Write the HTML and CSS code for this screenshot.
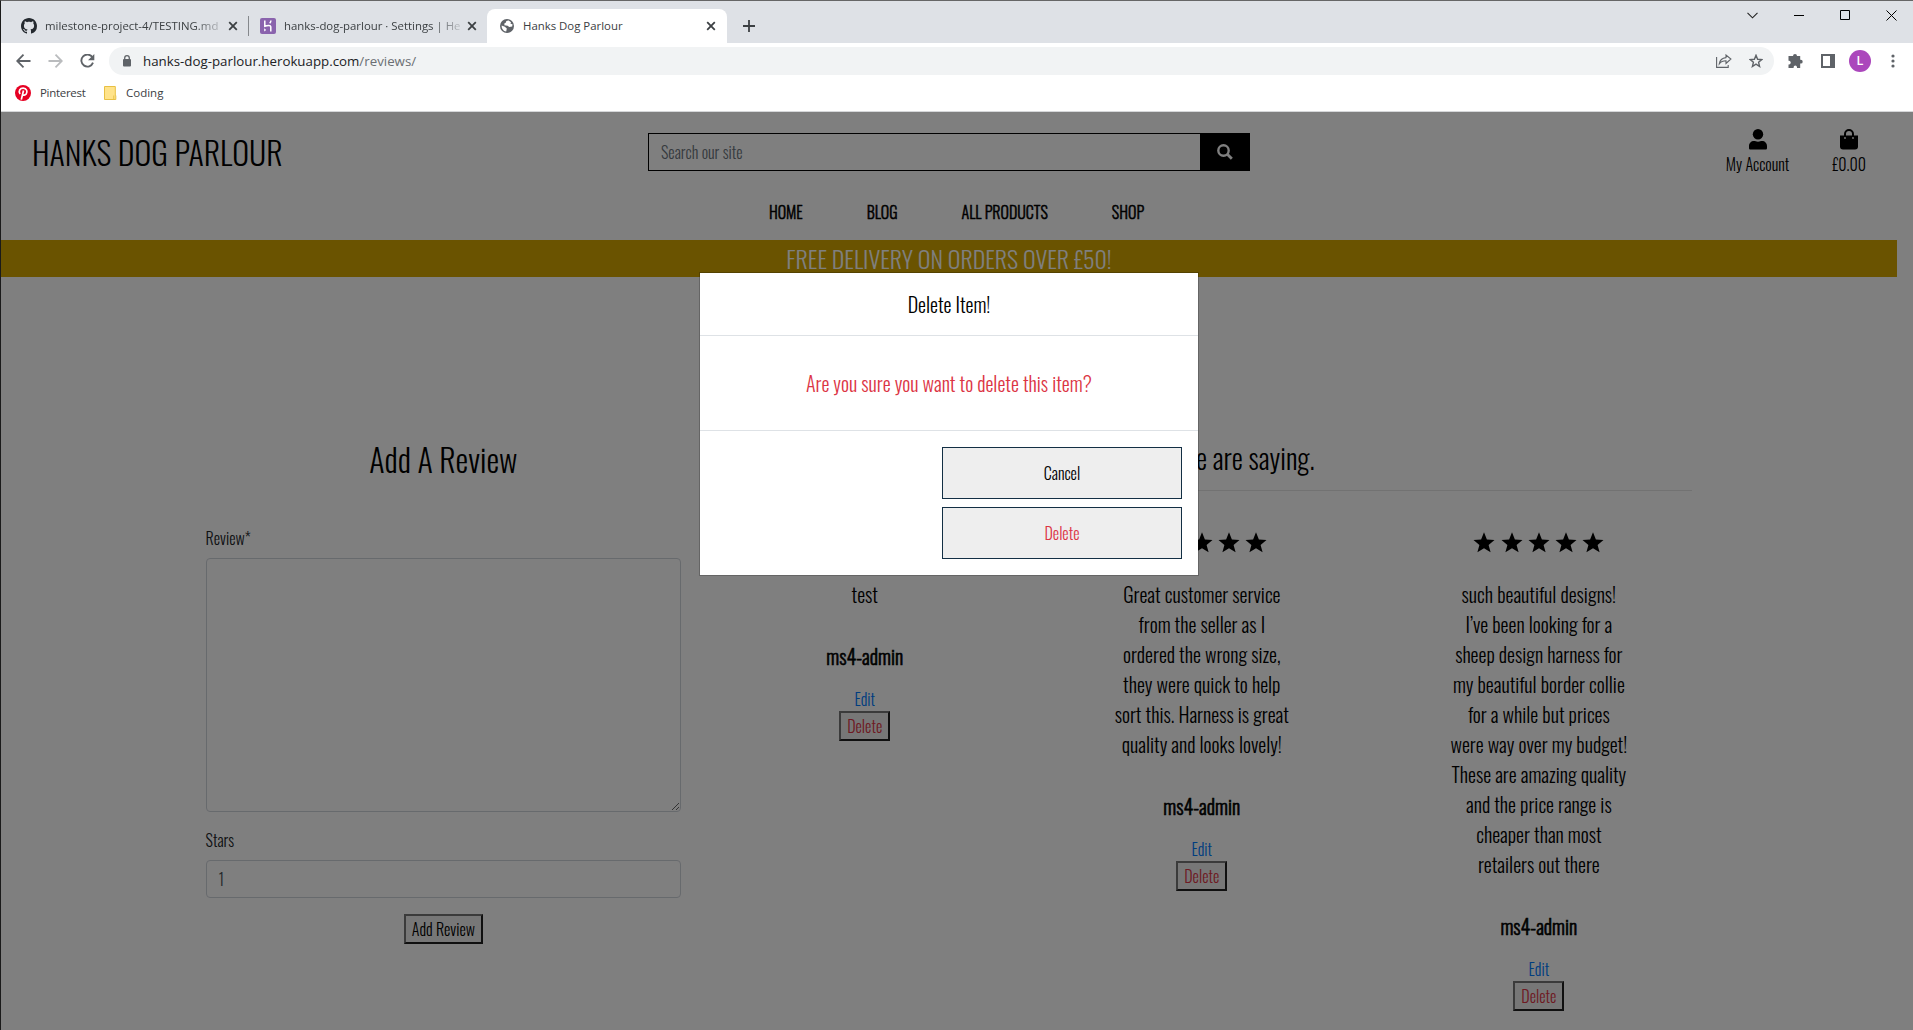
FILE: index.html
```html
<!DOCTYPE html>
<html lang="en">
<head>
<meta charset="utf-8">
<title>Hanks Dog Parlour</title>
<link rel="stylesheet" href="styles.css">
</head>
<body>
<svg width="0" height="0" class="defs">
  <symbol id="close" viewBox="0 0 10 10"><path d="M1.2 1.2l7.6 7.6M8.8 1.2L1.2 8.8" stroke="#3c4043" stroke-width="1.8" fill="none"/></symbol>
  <symbol id="star" viewBox="0 0 22 21"><path d="M11 .3l2.9 7.200 7.600.4-5.900 5 2 7.400L11 16.300l-6.600 4 2-7.400L.5 7.900l7.600-.4z"/></symbol>
</svg>
<div class="window">
  <div class="tabstrip">
    <div class="tab tab-first">
      <svg class="fav" width="16" height="16" viewBox="0 0 16 16"><path fill="#24292f" d="M8 0C3.58 0 0 3.58 0 8c0 3.54 2.29 6.53 5.47 7.59.4.07.55-.17.55-.38 0-.19-.01-.82-.01-1.49-2.01.37-2.53-.49-2.69-.94-.09-.23-.48-.94-.82-1.13-.28-.15-.68-.52-.01-.53.63-.01 1.08.58 1.23.82.72 1.21 1.87.87 2.33.66.07-.52.28-.87.51-1.07-1.78-.2-3.64-.89-3.64-3.95 0-.87.31-1.59.82-2.15-.08-.2-.36-1.02.08-2.12 0 0 .67-.21 2.2.82.64-.18 1.32-.27 2-.27s1.36.09 2 .27c1.53-1.04 2.2-.82 2.2-.82.44 1.1.16 1.92.08 2.12.51.56.82 1.27.82 2.15 0 3.07-1.87 3.75-3.65 3.95.29.25.54.73.54 1.48 0 1.07-.01 1.93-.01 2.2 0 .21.15.46.55.38A8.01 8.01 0 0 0 16 8c0-4.42-3.58-8-8-8z"/></svg>
      <span class="tab-title fade">milestone-project-4/TESTING.md</span>
      <svg class="x" width="10" height="10"><use href="#close"/></svg>
    </div>
    <div class="tab tab-second">
      <svg class="fav" width="16" height="16" viewBox="0 0 16 16"><rect width="16" height="16" rx="2" fill="#8a63ad"/><path d="M4.800 2.600v5.600c2.600-1 6-1.300 6 .6v4.600M10.900 2.600c0 1.200-.5 2-1.200 2.700" fill="none" stroke="#fff" stroke-width="1.500"/><path d="M4.200 10.300l2 1.600-2 1.600z" fill="#fff"/></svg>
      <span class="tab-title fade">hanks-dog-parlour · Settings | He</span>
      <svg class="x" width="10" height="10"><use href="#close"/></svg>
    </div>
    <div class="tab tab-active">
      <svg class="globe" width="14" height="14" viewBox="0 0 14 14"><circle cx="7" cy="7" r="7" fill="#5f6368"/><path d="M8.700 1.500c-2.200-.1-2.800.8-2.700 1.900l-1.500.8-.2 2 3.300.5 1.700 1.200 2.900-.3.300-2.300-2-.6.500-1.500z" fill="#fff"/><path d="M1.600 6.600l3.300 1.200 1.900 1.700-.6 3-1.300-.2C2.800 11.400 1.500 9.500 1.600 6.600z" fill="#fff"/></svg>
      <span class="tab-title">Hanks Dog Parlour</span>
      <svg class="x" width="10" height="10"><use href="#close"/></svg>
    </div>
    <svg class="newtab" width="12" height="12" viewBox="0 0 12 12"><path d="M6 0v12M0 6h12" stroke="#3c4043" stroke-width="1.800"/></svg>
    <div class="caption">
      <svg width="11" height="7" viewBox="0 0 11 7"><path d="M.5.8l5 5 5-5" fill="none" stroke="#222" stroke-width="1.100"/></svg>
      <svg width="10" height="10" viewBox="0 0 10 10"><path d="M0 5.500h10" stroke="#000"/></svg>
      <svg width="10" height="10" viewBox="0 0 10 10"><path d="M.5.5h9v9h-9z" fill="none" stroke="#000"/></svg>
      <svg width="11" height="11" viewBox="0 0 11 11"><path d="M.5.5l10 10M10.500.5l-10 10" stroke="#000"/></svg>
    </div>
  </div>
  <div class="toolbar">
    <svg width="15" height="14" viewBox="0 0 15 14"><path d="M14.500 7H1.500M7.500.7L1.200 7l6.300 6.300" fill="none" stroke="#5f6368" stroke-width="1.800"/></svg>
    <svg width="15" height="14" viewBox="0 0 15 14"><path d="M.5 7h13M7.500.7L13.800 7l-6.300 6.300" fill="none" stroke="#babcbe" stroke-width="1.800"/></svg>
    <svg width="15" height="14" viewBox="0 0 15 14"><path d="M12.400 3.300A6 6 0 1 0 13 8.700" fill="none" stroke="#5f6368" stroke-width="1.900"/><path d="M14.300 0v6.300H8z" fill="#5f6368"/></svg>
    <div class="omnibox">
      <svg width="8" height="12" viewBox="0 0 8 12"><rect y="4" width="8" height="7.500" rx="1" fill="#5f6368"/><path d="M1.700 4.500V3a2.300 2.300 0 0 1 4.600 0v1.500" fill="none" stroke="#5f6368" stroke-width="1.300"/></svg>
      <span class="url">hanks-dog-parlour.herokuapp.com<i>/reviews/</i></span>
      <svg class="share" width="16" height="14" viewBox="0 0 16 14"><path d="M.6 3v10.400h11.600v-2.500M10 1v2.600C6 4 3.800 6.300 3.300 9.800 5 7.600 7 6.800 10 6.800v2.600L14.900 5z" fill="none" stroke="#5f6368" stroke-width="1.100"/></svg>
      <svg width="14" height="14" viewBox="0 0 14 14"><path d="M7 1.300l1.600 4 4.200.3-3.200 2.700 1 4.200L7 10.200l-3.600 2.300 1-4.200L1.200 5.600l4.200-.3z" fill="none" stroke="#5f6368" stroke-width="1.400"/></svg>
    </div>
    <div class="actions">
      <svg width="15" height="14" viewBox="0 0 15 14"><path fill="#5f6368" d="M5 2a2 2 0 0 1 4 0h3.200v3.800h.6a1.900 1.900 0 0 1 0 3.800h-.6V14H9v-.7a1.700 1.700 0 0 0-3.400 0v.7H.5v-3.600h.8a1.900 1.900 0 0 0 0-3.700H.5V2z"/></svg>
      <svg width="14" height="14" viewBox="0 0 14 14"><path fill="#5f6368" fill-rule="evenodd" d="M0 0h14v14H0zM2 2v10h7V2z"/></svg>
      <span class="avatar">L</span>
      <svg width="4" height="14" viewBox="0 0 4 14" fill="#5f6368"><circle cx="2" cy="2" r="1.600"/><circle cx="2" cy="7" r="1.600"/><circle cx="2" cy="12" r="1.600"/></svg>
    </div>
  </div>
  <div class="bookmarks">
    <svg width="16" height="16" viewBox="0 0 16 16"><circle cx="8" cy="8" r="8" fill="#e60023"/><path d="M5.100 9C3 6 5 3.200 8.200 3.200c3.600 0 4.600 3.600 3 5.900-1.200 1.600-3.100 1.300-3.500.2M8.500 5.500L6.300 14.600" fill="none" stroke="#fff" stroke-width="1.700"/></svg>
    <span class="bm-pin">Pinterest</span>
    <svg width="13" height="14" viewBox="0 0 13 14"><path d="M.5.5h10.800v9h.5v4H.5z" fill="#ffe38a" stroke="#e8c044"/><path d="M9.800 13V9.500" stroke="#e8c044"/></svg>
    <span class="bm-cod">Coding</span>
  </div>

  <div class="page">
    <header class="head">
      <h1 class="brand">HANKS DOG PARLOUR</h1>
      <form class="search"><span class="field">Search our site</span><span class="go"><svg width="16" height="16" viewBox="0 0 16 16"><circle cx="6.500" cy="6.500" r="5.200" fill="none" stroke="#fff" stroke-width="2.400"/><path d="M10.300 10.300l4.500 4.500" stroke="#fff" stroke-width="2.800"/></svg></span></form>
      <div class="account">
        <a class="acc"><svg width="18" height="21" viewBox="0 0 18 21"><circle cx="9" cy="5.200" r="5.200"/><path d="M0 20.500v-3.300C0 14 2.200 12 5 12c1.300 0 2 .7 4 .7s2.700-.7 4-.7c2.800 0 5 2 5 5.200v1.800c0 1-.6 1.500-1.500 1.500H1.500c-1 0-1.500-.5-1.500-1.500z"/></svg><span>My Account</span></a>
        <a class="bag"><svg width="18" height="21" viewBox="0 0 18 21"><path d="M0 6.500h18v11c0 2-1 3-3 3H3c-2 0-3-1-3-3z"/><path d="M5 8V5a4 4 0 0 1 8 0v3" fill="none" stroke="#000" stroke-width="2"/><circle cx="5" cy="9" r=".9" fill="#fff"/><circle cx="13" cy="9" r=".9" fill="#fff"/></svg><span>£0.00</span></a>
      </div>
    </header>
    <nav class="nav"><a>HOME</a><a>BLOG</a><a>ALL PRODUCTS</a><a>SHOP</a></nav>
    <div class="banner">FREE DELIVERY ON ORDERS OVER £50!</div>
    <main class="content">
      <section class="add">
        <h2>Add A Review</h2>
        <label>Review*</label>
        <textarea class="control"></textarea>
        <label>Stars</label>
        <div class="control number">1</div>
        <button class="plain">Add Review</button>
      </section>
      <section class="reviews">
        <h3>What people are saying.</h3>
        <div class="grid">
          <article><div class="stars"><svg><use href="#star"/></svg></div><p>test</p><strong>ms4-admin</strong><a>Edit</a><button class="plain del">Delete</button></article>
          <article><div class="stars"><svg><use href="#star"/></svg><svg><use href="#star"/></svg><svg><use href="#star"/></svg><svg><use href="#star"/></svg><svg><use href="#star"/></svg></div><p>Great customer service<br>from the seller as I<br>ordered the wrong size,<br>they were quick to help<br>sort this. Harness is great<br>quality and looks lovely!</p><strong>ms4-admin</strong><a>Edit</a><button class="plain del">Delete</button></article>
          <article><div class="stars"><svg><use href="#star"/></svg><svg><use href="#star"/></svg><svg><use href="#star"/></svg><svg><use href="#star"/></svg><svg><use href="#star"/></svg></div><p>such beautiful designs!<br>I’ve been looking for a<br>sheep design harness for<br>my beautiful border collie<br>for a while but prices<br>were way over my budget!<br>These are amazing quality<br>and the price range is<br>cheaper than most<br>retailers out there</p><strong>ms4-admin</strong><a>Edit</a><button class="plain del">Delete</button></article>
        </div>
      </section>
    </main>
    <div class="backdrop">
      <div class="modal">
        <div class="modal-head">Delete Item!</div>
        <div class="modal-body">Are you sure you want to delete this item?</div>
        <div class="modal-foot"><button>Cancel</button><button class="danger">Delete</button></div>
      </div>
    </div>
  </div>
</div>
</body>
</html>
```
FILE: styles.css
```css
* { box-sizing: border-box; }
body { margin: 0; font-family: "Open Sans", "Noto Sans", sans-serif; }
svg { display: block; flex: none; }
.defs { position: absolute; }
.window { width: 1913px; height: 1030px; overflow: hidden; display: flex; flex-direction: column; border-left: 1px solid #1a1a1a; border-top: 1px solid #666; background: #fff; }

/* Browser frame */
.tabstrip { height: 42px; flex: none; display: flex; align-items: flex-end; background: #dee1e6; font-size: 11.4px; color: #3c4043; }
.tab { height: 34px; display: flex; align-items: center; }
.tab-first { width: 248px; padding-left: 20px; border-right: 1px solid #85888c; height: 20px; margin-bottom: 7px; }
.tab-second { width: 238px; padding-left: 11px; }
.tab-title { white-space: nowrap; padding-bottom: 1px; }
.fav { margin-right: 8px; }
.fade { width: 177px; -webkit-mask-image: linear-gradient(90deg, #000 84%, transparent 103%); mask-image: linear-gradient(90deg, #000 84%, transparent 103%); }
.x { margin-left: 6px; }
.tab-active { width: 240px; padding-left: 13px; background: #fff; border-radius: 8px 8px 0 0; }
.globe { margin-right: 9px; }
.tab-active .tab-title { width: 177px; }
.newtab { margin: 0 0 11px 16px; }
.caption { margin-left: auto; align-self: flex-start; height: 28px; padding-right: 16px; display: flex; align-items: center; gap: 36px; }
.toolbar { height: 36px; flex: none; display: flex; align-items: center; padding-left: 15px; }
.toolbar > svg { margin-right: 17px; }
.toolbar > svg:nth-child(3) { margin-right: 14px; }
.omnibox { width: 1665px; height: 28px; border-radius: 14px; background: #f1f3f4; display: flex; align-items: center; padding: 0 11px 0 14px; }
.url { margin-left: 12px; font-size: 13.3px; color: #202124; }
.url i { font-style: normal; color: #6a6e73; }
.share { margin: 0 17px 0 auto; }
.actions { display: flex; align-items: center; margin-left: 14px; }
.actions svg:nth-of-type(2) { margin-left: 18px; }
.avatar { width: 22px; height: 22px; margin: 0 20px 0 14px; border-radius: 50%; background: #ab47bc; color: #fff; font: 500 12px/22px Roboto, sans-serif; text-align: center; }
.bookmarks { height: 33px; flex: none; display: flex; align-items: center; padding: 0 0 5px 14px; border-bottom: 1px solid #d5d7d9; font-size: 11.5px; color: #3c4043; }
.bm-pin { width: 46px; margin: 0 18px 0 9px; letter-spacing: -.3px; }
.bm-cod { margin-left: 9px; }

/* Shop page */
.page { flex: 1; position: relative; padding-right: 16px; font: 300 16px/24px Oswald, sans-serif; color: #212529; overflow: hidden; }
.head { height: 82px; display: flex; position: relative; padding: 21px 31px 0 31px; color: #000; }
.brand { width: 616px; margin: 0; font-size: 32px; line-height: 37px; font-weight: 300; }
.search { width: 602px; height: 38px; display: flex; border: 1px solid #000; }
.field { flex: 1; padding: 6px 12px; color: #6c757d; }
.go { width: 49px; background: #000; display: flex; align-items: center; justify-content: center; }
.account { margin: -4px 0 0 auto; display: flex; gap: 43px; }
.account a { display: flex; flex-direction: column; align-items: center; gap: 2px; }
.nav { height: 46px; display: flex; justify-content: center; gap: 64px; padding: 6px 0 0 15px; color: #000; -webkit-text-stroke: .5px #000; }
.banner { height: 37px; background: #d4a600; color: #fff; text-align: center; font-size: 24px; line-height: 37px; }
.content { width: 80%; margin: 163px auto 0; display: grid; grid-template-columns: 1fr 2fr; }
.add { padding: 0 15px; display: flex; flex-direction: column; }
h2 { margin: 0 0 48px; font-size: 32px; line-height: 38px; font-weight: 300; text-align: center; color: #000; }
.control { width: 100%; margin: 8px 0 16px; border: 1px solid #ced4da; border-radius: 4px; background: #fff; }
textarea.control { height: 254px; }
.number { height: 38px; padding: 6px 12px; color: #495057; }
.plain { align-self: center; height: 30px; padding: 1px 6px; border: 2px outset #767676; border-radius: 0; background: #efefef; font: inherit; color: #000; }
.reviews { min-width: 0; text-align: center; color: #000; }
h3 { margin: 0 15px; height: 51px; border-bottom: 1px solid #e5e5e5; font-size: 28px; line-height: 35px; font-weight: 300; }
.grid { display: grid; grid-template-columns: repeat(3, 1fr); }
article { display: flex; flex-direction: column; align-items: center; }
.stars { display: flex; gap: 5.300px; margin-top: 41px; height: 47px; }
.stars svg { width: 22px; height: 21px; }
article p { margin: 0 0 32px; font-size: 20px; line-height: 30px; white-space: nowrap; }
strong { font-size: 20px; line-height: 30px; font-weight: 300; -webkit-text-stroke: .6px #000; margin-bottom: 16px; }
article a { color: #007bff; }
.del { color: #dc3545; }

/* Dialog */
.backdrop { position: absolute; inset: 0; background: rgba(0, 0, 0, .5); }
.modal { position: absolute; left: 698px; top: 160px; width: 500px; height: 304px; background: #fff; background-clip: padding-box; border: 1px solid rgba(0, 0, 0, .2); text-align: center; font-size: 20px; color: #000; }
.modal-head { height: 63px; padding: 16px; line-height: 30px; border-bottom: 1px solid #dee2e6; }
.modal-body { height: 94px; line-height: 94px; color: #dc3545; }
.modal-foot { border-top: 1px solid #dee2e6; padding: 16px; display: flex; flex-direction: column; align-items: flex-end; gap: 8px; }
.modal-foot button { width: 240px; height: 52px; border: 1px solid #132f44; background: #eee; font: 300 16px/24px Oswald, sans-serif; color: #000; }
.modal-foot .danger { color: #dc3545; }
```
